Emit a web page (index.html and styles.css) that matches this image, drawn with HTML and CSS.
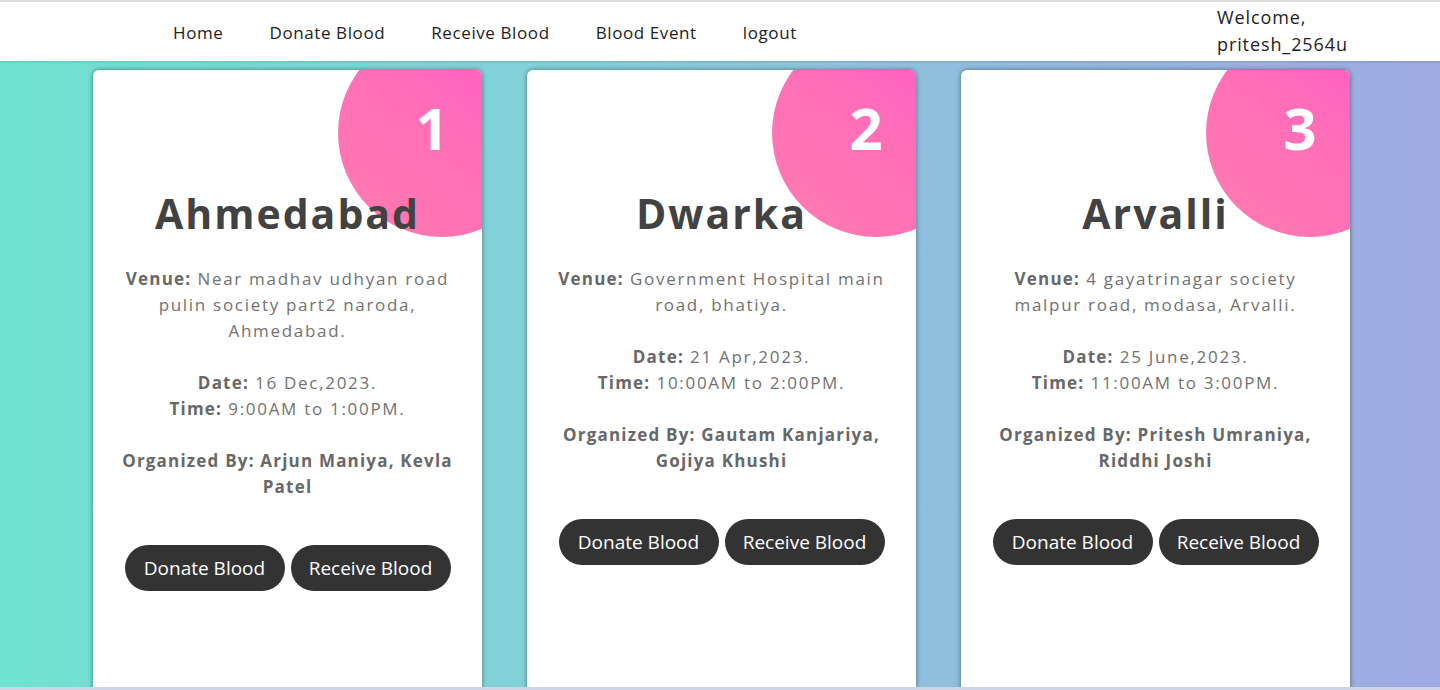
FILE: index.html
```html
<!DOCTYPE html>
<html>
<head>
<meta charset="utf-8">
<link rel="stylesheet" href="styles.css">
</head>
<body>
<div class="page">
  <header class="navbar">
    <ul class="nav-links">
      <li><a href="#">Home</a></li>
      <li><a href="#">Donate Blood</a></li>
      <li><a href="#">Receive Blood</a></li>
      <li><a href="#">Blood Event</a></li>
      <li><a href="#">logout</a></li>
    </ul>
    <div class="welcome">Welcome,<br>pritesh_2564u</div>
  </header>
  <main class="cards">
    <section class="card">
      <div class="circle"><span>1</span></div>
      <h2 class="city">Ahmedabad</h2>
      <p class="info"><b>Venue:</b> Near madhav udhyan road pulin society part2 naroda, Ahmedabad.</p>
      <p class="info"><b>Date:</b> 16 Dec,2023.<br><b>Time:</b> 9:00AM to 1:00PM.</p>
      <p class="info org"><b>Organized By: Arjun Maniya, Kevla Patel</b></p>
      <div class="actions">
        <button class="btn">Donate Blood</button>
        <button class="btn">Receive Blood</button>
      </div>
    </section>
    <section class="card">
      <div class="circle"><span>2</span></div>
      <h2 class="city">Dwarka</h2>
      <p class="info"><b>Venue:</b> Government Hospital main road, bhatiya.</p>
      <p class="info"><b>Date:</b> 21 Apr,2023.<br><b>Time:</b> 10:00AM to 2:00PM.</p>
      <p class="info org"><b>Organized By: Gautam Kanjariya, Gojiya Khushi</b></p>
      <div class="actions">
        <button class="btn">Donate Blood</button>
        <button class="btn">Receive Blood</button>
      </div>
    </section>
    <section class="card">
      <div class="circle"><span>3</span></div>
      <h2 class="city">Arvalli</h2>
      <p class="info"><b>Venue:</b> 4 gayatrinagar society malpur road, modasa, Arvalli.</p>
      <p class="info"><b>Date:</b> 25 June,2023.<br><b>Time:</b> 11:00AM to 3:00PM.</p>
      <p class="info org"><b>Organized By: Pritesh Umraniya, Riddhi Joshi</b></p>
      <div class="actions">
        <button class="btn">Donate Blood</button>
        <button class="btn">Receive Blood</button>
      </div>
    </section>
  </main>
</div>
</body>
</html>
```
FILE: styles.css
```css
* { box-sizing: border-box; }
html, body { margin: 0; height: 100%; }
body {
  font-family: "Open Sans", "DejaVu Sans", sans-serif;
  overflow: hidden;
}
.page {
  height: 690px;
  display: flex;
  flex-direction: column;
  background: linear-gradient(to right, #6fe2d0 0%, #82d2d9 35%, #90bfde 65%, #9eaae2 100%);
  border-bottom: 3px solid #cdd4e6;
}
.navbar {
  height: 61px;
  flex: none;
  background: #fff;
  border-top: 2px solid #dcdcdc;
  display: flex;
  align-items: center;
  padding-left: 150px;
  box-shadow: 0 1px 2px rgba(0,0,0,0.15);
}
.nav-links {
  list-style: none;
  margin: 0;
  padding: 0;
  display: flex;
  margin-top: 2px;
}
.nav-links a {
  display: block;
  padding: 0 23px;
  color: #222;
  text-decoration: none;
  font-size: 17px;
  letter-spacing: 0.6px;
}
.welcome {
  margin-left: auto;
  width: 223px;
  font-size: 18px;
  line-height: 27px;
  letter-spacing: 0.9px;
  color: #222;
  margin-top: -2px;
}
.cards {
  flex: 1;
  min-height: 0;
  display: flex;
  gap: 45px;
  padding: 9px 0 0 93px;
  overflow: hidden;
}
.card {
  position: relative;
  width: 389px;
  height: 660px;
  flex: none;
  background: #fff;
  border-radius: 6px;
  box-shadow: 0 0 5px rgba(0,0,0,0.45);
  overflow: hidden;
  text-align: center;
  padding: 115px 21px 0;
  color: #727272;
}
.circle {
  position: absolute;
  width: 208px;
  height: 208px;
  border-radius: 50%;
  top: -41px;
  left: 245px;
  background: linear-gradient(220deg, #ff57cb 0%, #ff6fb8 50%, #ff7bb0 100%);
}
.circle span {
  position: absolute;
  left: 69px;
  top: 70px;
  width: 50px;
  text-align: center;
  color: #fff;
  font-size: 58px;
  font-weight: 700;
  line-height: 1;
}
.city {
  position: relative;
  margin: 0 0 25px;
  font-size: 41px;
  font-weight: 700;
  letter-spacing: 2px;
  color: #424242;
  line-height: 56px;
}
.info {
  margin: 0 0 26px;
  font-size: 17px;
  line-height: 26px;
  letter-spacing: 1.7px;
}
.info b { color: #686868; letter-spacing: 1.2px; }
.org { margin-bottom: 45px; }
.actions {
  display: flex;
  justify-content: center;
  gap: 6px;
}
.btn {
  height: 46px;
  width: 160px;
  border: none;
  border-radius: 23px;
  background: #333;
  color: #fff;
  font-family: inherit;
  font-size: 19px;
  padding: 0;
}
```
